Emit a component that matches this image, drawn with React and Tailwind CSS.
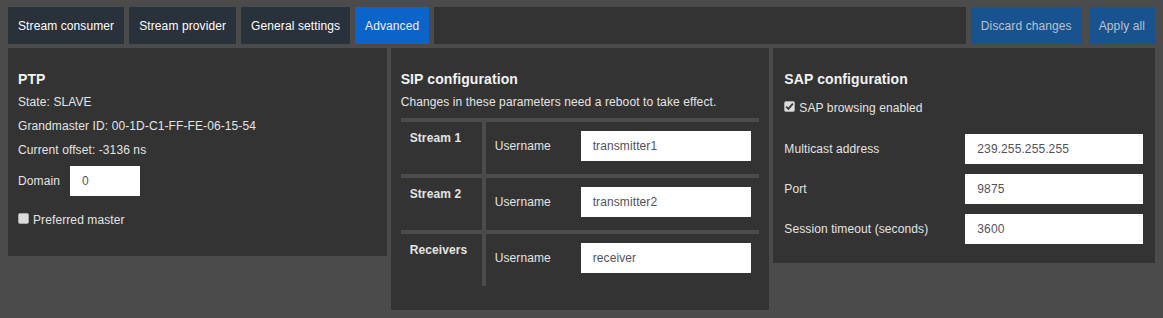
import React from 'react';

const tabs = ['Stream consumer', 'Stream provider', 'General settings'];

const Checkbox = ({ checked }) => (
    <span className="mt-[1px] w-[11px] h-[11px] shrink-0 rounded-[2px] border border-[#a9a9a9] bg-[#dcdcdc] flex items-center justify-center">
        {checked && (
            <svg width="9" height="9" viewBox="0 0 9 9">
                <path d="M1.2 4.6 L3.4 6.9 L7.9 1.6" fill="none" stroke="#3c3c3c" strokeWidth="1.8" />
            </svg>
        )}
    </span>
);

const TextInput = ({ value, className }) => (
    <div className={`h-[30px] bg-white flex items-center pl-[12px] text-[12px] text-[#52525e] ${className}`}>
        {value}
    </div>
);

const SipRow = ({ label, value }) => (
    <div className="flex border-t-4 border-[#4b4b4b]">
        <div className="w-[85px] shrink-0 border-r-4 border-[#4b4b4b] pl-[9px] pt-[8px] font-bold leading-4">
            {label}
        </div>
        <div className="flex-1 flex items-center pl-[9px] pr-[8px] pt-[9px] pb-[13px]">
            <span className="w-[86px] shrink-0">Username</span>
            <TextInput value={value} className="w-[170px]" />
        </div>
    </div>
);

export default function App() {
    return (
        <div className="w-[1163px] h-[318px] bg-[#4b4b4b] px-2 pt-[7px] text-[12px] tracking-[0.1px] text-[#e4e4e4] font-['Liberation_Sans',Arial,sans-serif]">
            {/* Top bar */}
            <div className="flex gap-[5px] h-[37px]">
                {tabs.map((t) => (
                    <div key={t} className="px-[10px] flex items-center bg-[#29313a] text-white">
                        {t}
                    </div>
                ))}
                <div className="px-[10px] flex items-center bg-[#0b64ca] text-[#eef0f6]">Advanced</div>
                <div className="flex-1 bg-[#333333]" />
                <div className="px-[10px] flex items-center bg-[#18528f] text-[#b8c3d2]">Discard changes</div>
                <div className="ml-[2px] px-[10px] flex items-center bg-[#18528f] text-[#b8c3d2]">Apply all</div>
            </div>

            {/* Panels */}
            <div className="mt-[4px] flex items-start gap-[4px]">
                {/* PTP */}
                <div className="flex-1 bg-[#333333] px-[10px] pt-[23px] pb-[28px]">
                    <div className="text-[14px] font-bold leading-4 text-[#f2f2f2]">PTP</div>
                    <div className="mt-[3px] leading-[24px]">
                        <div>State: SLAVE</div>
                        <div>Grandmaster ID: 00-1D-C1-FF-FE-06-15-54</div>
                        <div>Current offset: -3136 ns</div>
                    </div>
                    <div className="mt-[4px] flex items-center gap-[10px]">
                        <span>Domain</span>
                        <TextInput value="0" className="w-[70px]" />
                    </div>
                    <div className="mt-[16px] flex items-start gap-[4px] leading-4">
                        <Checkbox />
                        <span>Preferred master</span>
                    </div>
                </div>

                {/* SIP */}
                <div className="flex-1 bg-[#333333] px-[10px] pt-[23px] pb-[24px]">
                    <div className="text-[14px] font-bold leading-4 text-[#f2f2f2]">SIP configuration</div>
                    <div className="mt-[3px] leading-[24px]">Changes in these parameters need a reboot to take effect.</div>
                    <div className="mt-[4px]">
                        <SipRow label="Stream 1" value="transmitter1" />
                        <SipRow label="Stream 2" value="transmitter2" />
                        <SipRow label="Receivers" value="receiver" />
                    </div>
                </div>

                {/* SAP */}
                <div className="flex-1 bg-[#333333] pl-[11px] pr-[12px] pt-[23px] pb-[19px]">
                    <div className="text-[14px] font-bold leading-4 text-[#f2f2f2]">SAP configuration</div>
                    <div className="mt-[13px] flex items-start gap-[4px] leading-4">
                        <Checkbox checked />
                        <span>SAP browsing enabled</span>
                    </div>
                    <div className="mt-[18px] flex flex-col gap-[10px]">
                        {[
                            ['Multicast address', '239.255.255.255'],
                            ['Port', '9875'],
                            ['Session timeout (seconds)', '3600'],
                        ].map(([l, v]) => (
                            <div key={l} className="flex items-center">
                                <span className="w-[181px] shrink-0">{l}</span>
                                <TextInput value={v} className="flex-1" />
                            </div>
                        ))}
                    </div>
                </div>
            </div>
        </div>
    );
}
